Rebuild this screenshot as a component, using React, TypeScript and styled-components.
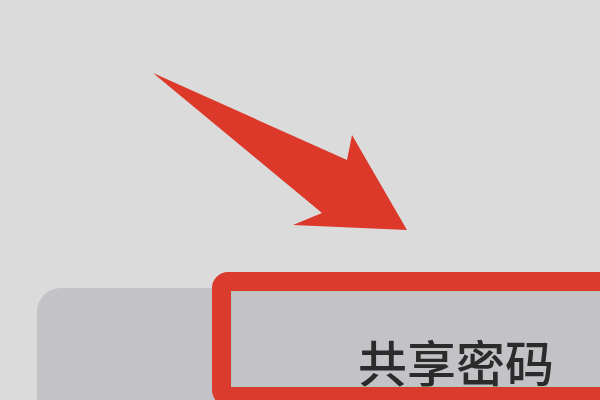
import React from "react"
import styled, { createGlobalStyle } from "styled-components"

const GlobalStyle = createGlobalStyle`
  html, body {
    margin: 0;
    padding: 0;
    background: #dbdbdb;
    overflow: hidden;
  }
`

const Page = styled.div`
  position: relative;
  width: 600px;
  height: 400px;
  overflow: hidden;
  background: #dbdbdb;
  font-family: "Noto Sans CJK SC", "Noto Sans", sans-serif;
  display: flex;
  flex-direction: column;
  padding-top: 288px;
  padding-left: 37px;
  box-sizing: border-box;
`

const Arrow = styled.svg`
  position: absolute;
  left: 0;
  top: 0;
  width: 600px;
  height: 400px;
  filter: blur(0.6px);
`

const Sheet = styled.div`
  flex: 1;
  margin-right: -60px;
  background: #c3c3c7;
  border-top-left-radius: 24px;
  display: flex;
  padding-left: 175px;
`

const Option = styled.div`
  position: relative;
  flex: 1;
  height: 200px;
  padding-top: 48px;
  padding-left: 146px;
  box-sizing: border-box;
`

const Label = styled.span`
  font-size: 49px;
  line-height: 1;
  font-weight: 500;
  color: #2b2b2b;
  letter-spacing: 0;
`

// red annotation frame drawn over the option
const Highlight = styled.div`
  position: absolute;
  left: 0;
  top: -16px;
  right: 0;
  height: 134px;
  border: 19px solid #da3b2d;
  border-radius: 16px;
  box-sizing: border-box;
  box-shadow: inset 0 0 0 1px rgba(150, 200, 150, 0.35);
  filter: blur(0.5px);
  pointer-events: none;
`

export default function App() {
  return (
    <>
      <GlobalStyle />
      <Page>
        <Sheet>
          <Option>
            <Label>共享密码</Label>
            <Highlight />
          </Option>
        </Sheet>
        <Arrow viewBox="0 0 600 400">
          <polygon
            points="153,73 347,160 352,135 407,230 293,225 322,213"
            fill="#dc392b"
          />
        </Arrow>
      </Page>
    </>
  )
}
